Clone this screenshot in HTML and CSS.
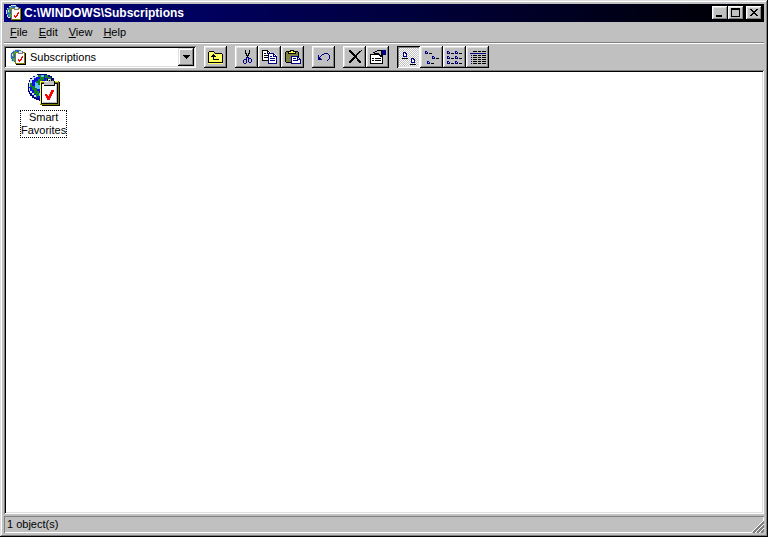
FILE: index.html
```html
<!DOCTYPE html>
<html lang="en">
<head>
<meta charset="utf-8">
<title>C:\WINDOWS\Subscriptions</title>
<link rel="stylesheet" href="styles.css">
</head>
<body>
<svg class="defs" aria-hidden="true">
  <symbol id="subs" viewBox="0 0 16 16">
    <path fill="#2060e0" d="M3 1h8v1h2v2h1v6h-2v3H4v-1H2v-2H1V9H0V5h1V3h2z"/>
    <path fill="#40a060" d="M4 2h3v1H5v2H4v3H2V4h2zM2 9h3v3H3v-2H2zM9 1h2v2H9z"/>
    <path fill="#dfdfdf" d="M5 0h5v1H5zM3 1h2v1H3zM1 3h1v1H1zM0 5h1v4H0zM5 3h2v1H5zM2 5h1v2H2zM1 10h1v2h2v1H2v-1H1z"/>
    <path fill="#000" d="M6 4h10v12H6z"/><path fill="#808000" d="M5 3h10v12H5z"/>
    <path fill="#fff" d="M6 4h8v10H6z"/><path fill="#808080" d="M8 3h5v2H8z"/><path fill="#dfdfdf" d="M9 2h3v2H9z"/>
    <path fill="red" d="M12 7h1v2h-1v2h-1v1h-1v1H9v-1H8v-2h1v1h1v-1h1V8h1z"/>
  </symbol>
</svg>
<main class="window">
  <header class="title">
    <svg class="i16"><use href="#subs"/></svg>
    <h1>C:\WINDOWS\Subscriptions</h1>
    <button class="cap" aria-label="Minimize"><svg viewBox="0 0 12 10"><path d="M2 7h6v2H2z"/></svg></button>
    <button class="cap" aria-label="Maximize"><svg viewBox="0 0 12 10"><path fill-rule="evenodd" d="M1 0h9v9H1zM2 2v6h7V2z"/></svg></button>
    <button class="cap close" aria-label="Close"><svg viewBox="0 0 12 10"><path d="M2 1h2v1h1v1h2V2h1V1h2v1H9v1H8v1H7v1h1v1h1v1h1v1H8V7H7V6H5v1H4v1H2V7h1V6h1V5h1V4H4V3H3V2H2z"/></svg></button>
  </header>
  <nav class="menu">
    <button><u>F</u>ile</button><button><u>E</u>dit</button><button><u>V</u>iew</button><button><u>H</u>elp</button>
  </nav>
  <div class="toolbar">
    <div class="combo">
      <svg class="i16"><use href="#subs"/></svg>
      <select aria-label="Folder"><option>Subscriptions</option></select>
      <span class="drop"><svg viewBox="0 0 7 4"><path d="M0 0h7v1H6v1H5v1H4v1H3V3H2V2H1V1H0z"/></svg></span>
    </div>
    <div class="group">
      <button class="tool" aria-label="Up one level"><svg class="i16 px" viewBox="0 -.5 16 16">
        <path fill="#ffff60" stroke="none" d="M1 2.5h5v2h9v10H0v-11h1z"/>
        <path stroke="#000" d="M1 2h5M0 3h1M6 3h1M0 4h1M7 4h7M0 5h1M14 5h1M0 6h1M14 6h1M0 7h1M14 7h1M0 8h1M14 8h1M0 9h1M14 9h1M0 10h1M14 10h1M0 11h1M14 11h1M0 12h1M14 12h1M0 13h15M5 5h1M4 6h3M3 7h5M5 8h1M5 9h1M5 10h6"/></svg></button>
    </div>
    <div class="group">
      <button class="tool" aria-label="Cut"><svg class="i16 px" viewBox="0 -.5 16 16">
        <path stroke="#000" d="M6 1h1M10 1h1M6 2h1M10 2h1M6 3h1M10 3h1M6 4h2M9 4h2M7 5h1M9 5h1M7 6h3M8 7h1"/>
        <path stroke="#000080" d="M7 8h3M7 9h1M9 9h3M5 10h3M9 10h1M12 10h1M4 11h1M7 11h1M9 11h1M12 11h1M4 12h1M7 12h1M9 12h1M12 12h1M4 13h1M7 13h1M10 13h2M5 14h2"/></svg></button>
      <button class="tool" aria-label="Copy"><svg class="i16 px" viewBox="0 0 16 16">
        <path fill="#fff" d="M1 1h5l3 3v8H1z"/>
        <path fill="#000" fill-rule="evenodd" d="M0 1h6v1h1v1h1v1h1v8H0zM1 2v9h7V5H5V2zM6 3v1h1V3zM2 4h2v1H2zM2 6h4v1H2zM2 8h4v1H2z"/>
        <path fill="#fff" d="M6 4h6l3 3v8H6z"/>
        <path fill="#000080" fill-rule="evenodd" d="M6 4h6v1h1v1h1v1h1v8H6zM7 5v9h7V8h-3V5zM12 6v1h1V6zM8 7h2v1H8zM8 9h5v1H8zM8 11h5v1H8z"/></svg></button>
      <button class="tool" aria-label="Paste"><svg class="i16 px" viewBox="0 0 16 16">
        <path fill="#000" d="M1 2h12v12H1zM0 3h14v10H0z"/><path fill="#808040" d="M1 3h12v10H1z"/>
        <path fill="#000" d="M5 1h4v1h2v3H3V2h2z"/><path fill="#ffff40" d="M6 2h2v1h2v1H4V3h2z"/>
        <path fill="#fff" d="M6 7h6l3 3v5H6z"/>
        <path fill="#000080" fill-rule="evenodd" d="M6 7h7v1h1v1h1v1h1v5H6zM7 8v6h8v-3h-3V8zM13 9v1h1V9zM8 9h3v1H8zM8 11h5v1H8z"/></svg></button>
    </div>
    <div class="group">
      <button class="tool" aria-label="Undo"><svg class="i16 px" viewBox="0 -.5 16 16">
        <path stroke="#000080" d="M8 4h4M6 5h2M12 5h1M2 6h1M5 6h1M13 6h1M2 7h1M4 7h1M13 7h1M2 8h2M13 8h1M2 9h3M13 9h1M2 10h4M12 10h1M11 11h1"/></svg></button>
    </div>
    <div class="group">
      <button class="tool" aria-label="Delete"><svg class="i16 px" viewBox="0 -.5 16 16">
        <path stroke="#000" d="M2 1h2M14 1h1M2 2h3M12 2h2M3 3h3M11 3h2M4 4h3M10 4h2M5 5h3M9 5h2M6 6h4M7 7h3M6 8h4M5 9h3M9 9h2M4 10h3M10 10h2M3 11h3M10 11h3M2 12h3M11 12h3M2 13h2M12 13h2"/></svg></button>
      <button class="tool" aria-label="Properties"><svg class="i16 px" viewBox="0 0 16 16">
        <path fill="#000" d="M0 5h13v10H0z"/><path fill="#fff" d="M1 6h11v8H1z"/>
        <path fill="#000" d="M2 9h2v1H2zM5 9h6v1H5zM2 11h2v1H2zM5 11h6v1H5zM5 2h2V1h5v7h-2V7H9V6H7V5H4V4H3V3h2z"/>
        <path fill="#c0c0c0" d="M7 2h4v4h-1V5H8V4H5V3h2z"/><path fill="#000" d="M7 4h2v1h1v1H8V5H7z"/>
        <path fill="#000080" d="M12 1h4v5h-4z"/></svg></button>
    </div>
    <div class="group">
      <button class="tool pressed" aria-label="Large icons" aria-pressed="true"><svg class="i16 px" viewBox="0 0 16 16">
        <path fill="#fff" d="M3 2h3v5H3zM11 8h3v5h-3z"/>
        <path fill="#000080" fill-rule="evenodd" d="M2 2h3v1h1v4H2zM3 3v3h2V4H4V3zM10 8h3v1h1v4h-4zM11 9v3h2v-2h-1V9z"/><path d="M1 8h6v1H1zM9 14h6v1H9z"/></svg></button>
      <button class="tool" aria-label="Small icons"><svg class="i16 px" viewBox="0 0 16 16">
        <path fill="#000080" fill-rule="evenodd" d="M1 2h2v1h1v2H1zM2 3v1h1V3zM8 7h2v1h1v2H8zM9 8v1h1V8zM3 12h2v1h1v2H3zM4 13v1h1v-1z"/><path d="M5 4h3v1H5zM12 9h3v1h-3zM7 14h3v1H7z"/></svg></button>
      <button class="tool" aria-label="List"><svg class="i16 px" viewBox="0 0 16 16">
        <path fill="#000080" fill-rule="evenodd" d="M0 2h2v1h1v2H0zM1 3v1h1V3zM8 2h2v1h1v2H8zM9 3v1h1V3zM0 7h2v1h1v2H0zM1 8v1h1V8zM8 7h2v1h1v2H8zM9 8v1h1V8zM0 12h2v1h1v2H0zM1 13v1h1v-1zM8 12h2v1h1v2H8zM9 13v1h1v-1z"/><path d="M4 4h3v1H4zM12 4h3v1h-3zM4 9h3v1H4zM12 9h3v1h-3zM4 14h3v1H4zM12 14h3v1h-3z"/></svg></button>
      <button class="tool" aria-label="Details"><svg class="i16 px" viewBox="0 -.5 16 16">
        <path stroke="#000" d="M3 2h4M8 2h3M12 2h4M3 6h4M8 6h3M12 6h4M3 8h4M8 8h3M12 8h4M3 10h4M8 10h3M12 10h4M3 12h4M8 12h3M12 12h4M3 14h4M8 14h3M12 14h4"/>
        <path stroke="#000080" d="M0 4h16M1 6h1M1 8h1M1 10h1M1 12h1M1 14h1"/></svg></button>
    </div>
  </div>
  <section class="files" aria-label="Folder contents">
    <a class="file" href="#smart">
      <svg class="i32" viewBox="0 0 32 32">
        <path fill="#000080" d="M9 0h10v1h3v1h2v2h2v3h1v14h-5v6H11v-1H8v-1H6v-1H4v-2H2v-2H1v-2H0V9h1V6h1V4h2V3h1V2h3z"/>
        <path fill="#1010e0" d="M8 1h10v1h3v2h2v3h2v12h-4v6H11v-1H8v-2H6v-2H4v-2H2v-3H1V9h1V6h2V4h1V2h3z"/>
        <path fill="#60c0ff" d="M7 8h4v3h2v4H9v3H7v-3H5v-3h2zM9 19h3v3H9zM13 1h3v2h-3z"/>
        <path fill="#108020" d="M9 1h4v2h3v3h-2v3h-2v2h-2V9H8V7h2V5h2V3H9zM17 1h3v2h3v3h2v7h-3V9h-2V7h-2V5h2V4h-3zM2 9h2v3h3v2h2v3h2v5H9v2H8v-4H6v-4H4v-3H2z"/>
        <path fill="#d0e8e8" d="M7 1h3v2H8v1H6v2H4v3H2v4H1V8h1V5h2V3h3zM1 14h1v3h2v2h2v2h2v2H6v-2H4v-2H2v-2H1z"/>
        <path fill="#000" d="M14 8h18v24H14z"/><path fill="#808000" d="M12 7h19v24H12z"/><path fill="#ffff40" d="M12 7h18v1H13v22h-1z"/>
        <path fill="#000" d="M13 9h17v21H13z"/>
        <path fill="#fff" d="M14 10h15v19H14z"/><path fill="#c0c0c0" d="M28 10h1v19H15v-1h13z"/>
        <path fill="#000" d="M16 7h3V5h5v2h3v5H16z"/><path fill="#c0c0c0" d="M16 7h4V5h3v2h3v4H16z"/><path fill="#fff" d="M17 7h3v1h-3zM20 5h2v1h-2z"/><path fill="#000" d="M21 6h1v1h-1z"/>
        <path fill="red" d="M24 16h2v2h-1v2h-1v2h-1v2h-1v2h-3v-2h-1v-2h-1v-2h2v1h1v1h1v-2h1v-2h1v-2h1z"/>
      </svg>
      <span class="name">Smart<br>Favorites</span>
    </a>
  </section>
  <footer class="status"><span>1 object(s)</span>
    <svg class="grip" viewBox="0 0 13 13"><path stroke="#fff" d="M0 13 13 0M4 13 13 4M8 13 13 8"/><path stroke="#808080" stroke-width="2" d="M2 13 13 2M6 13 13 6M10 13 13 10"/></svg>
  </footer>
</main>
</body>
</html>
```
FILE: styles.css
```css
* { box-sizing: border-box; }
body {
  margin: 0;
  background: #c0c0c0;
  color: #000;
  font: 11px/13px "Liberation Sans", Arial, sans-serif;
}
button, select { font: inherit; color: inherit; margin: 0; padding: 0; border: 0; background: none; }
svg { display: block; flex: none; shape-rendering: crispEdges; }
.defs { position: absolute; width: 0; height: 0; }
.i16 { width: 16px; height: 16px; }
.i32 { width: 32px; height: 32px; }
.px { fill: #000; }

.window {
  display: flex;
  flex-direction: column;
  min-height: 100vh;
  padding: 4px;
  box-shadow: inset -1px -1px #000, inset 1px 1px #dfdfdf, inset -2px -2px #808080, inset 2px 2px #fff;
}

.title {
  display: flex;
  align-items: center;
  height: 18px;
  padding: 0 2px;
  background: linear-gradient(90deg, #000080, #000);
  color: #fff;
}
.title h1 { flex: 1; margin: 0; padding-left: 2px; font-size: 12px; line-height: 18px; font-weight: bold; }
.cap {
  width: 16px;
  height: 14px;
  padding: 2px;
  background: #c0c0c0;
  box-shadow: inset -1px -1px #000, inset 1px 1px #fff, inset -2px -2px #808080, inset 2px 2px #dfdfdf;
}
.cap svg { width: 12px; height: 10px; }
.close { margin-left: 2px; }

.menu {
  display: flex;
  gap: 11px;
  height: 22px;
  padding: 0 6px;
  border-bottom: 1px solid #fff;
  box-shadow: inset 0 -1px #808080;
}
.menu button { height: 20px; }

.toolbar { display: flex; align-items: center; gap: 8px; height: 26px; }
.combo {
  display: flex;
  position: relative;
  align-items: center;
  width: 192px;
  height: 22px;
  padding: 2px 2px 2px 6px;
  background: #fff;
  box-shadow: inset 1px 1px #808080, inset -1px -1px #fff, inset 2px 2px #000, inset -2px -2px #dfdfdf;
}
.combo select { flex: 1; height: 18px; padding-left: 4px; appearance: none; outline: 0; }
.drop {
  display: grid;
  place-items: center;
  width: 16px;
  height: 18px;
  background: #c0c0c0;
  pointer-events: none;
  box-shadow: inset -1px -1px #000, inset 1px 1px #dfdfdf, inset -2px -2px #808080, inset 2px 2px #fff;
}
.drop svg { width: 7px; height: 4px; }
.group { display: flex; }
.tool {
  display: grid;
  place-items: center;
  width: 23px;
  height: 22px;
  box-shadow: inset -1px -1px #000, inset 1px 1px #fff, inset -2px -2px #808080, inset 2px 2px #dfdfdf;
}
.pressed {
  padding: 1px 0 0 1px;
  background: repeating-conic-gradient(#fff 0 25%, #c0c0c0 0 50%) 0 0 / 2px 2px;
  box-shadow: inset 1px 1px #000, inset -1px -1px #fff, inset 2px 2px #808080, inset -2px -2px #dfdfdf;
}

.files {
  flex: 1;
  padding: 4px 0 4px 16px;
  background: #fff;
  box-shadow: inset 1px 1px #808080, inset -1px -1px #fff, inset 2px 2px #000, inset -2px -2px #dfdfdf;
}
.file { display: inline-flex; flex-direction: column; align-items: center; gap: 4px; color: #000; text-decoration: none; text-align: center; }
.name { border: 1px dotted #000; }

.status {
  display: flex;
  align-items: center;
  justify-content: space-between;
  height: 17px;
  margin-top: 2px;
  padding-left: 3px;
  box-shadow: inset 1px 1px #808080, inset -1px -1px #fff;
}
.grip { align-self: flex-end; width: 13px; height: 13px; background: #c0c0c0; }
```
